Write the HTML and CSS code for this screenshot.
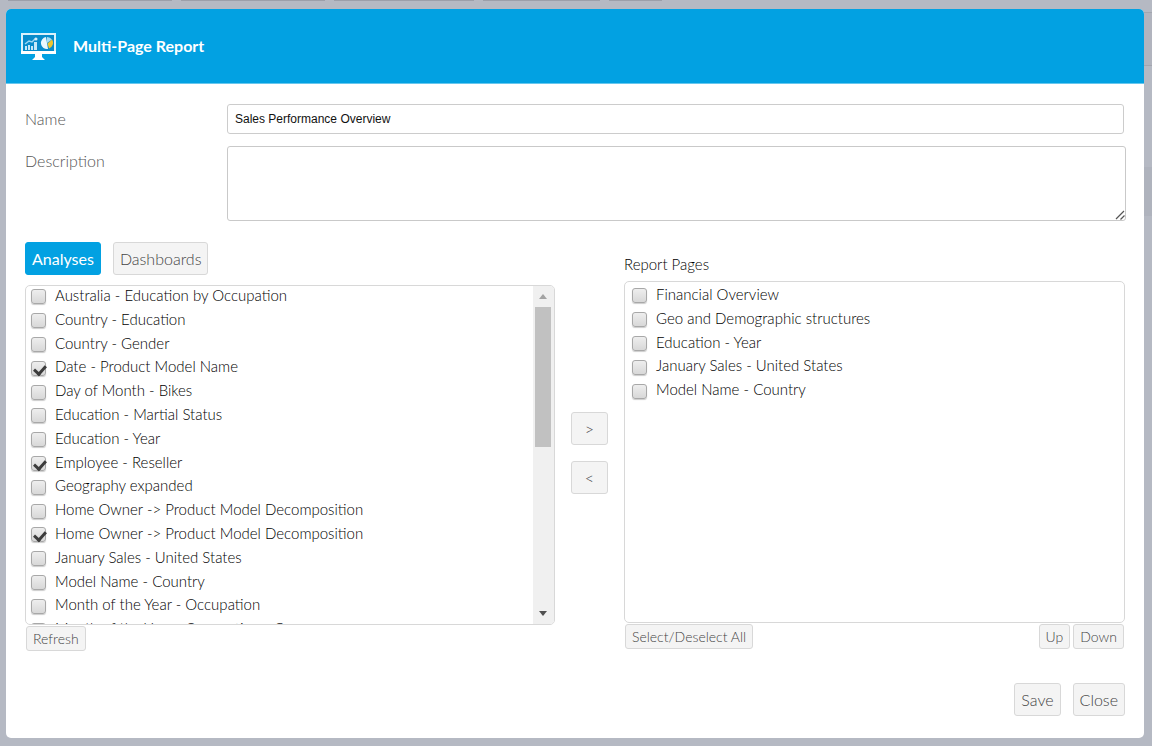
FILE: index.html
```html
<!DOCTYPE html>
<html lang="en">
<head>
<meta charset="utf-8">
<title>Multi-Page Report</title>
<link rel="stylesheet" href="styles.css">
</head>
<body>
<div class="backdrop" aria-hidden="true">
  <div class="tabs"><span class="tab tab-a"></span><span class="tab tab-b"></span><span class="tab tab-c"></span><span class="tab tab-d"></span><span class="tab tab-e"></span></div>
  <div class="band band-top"></div>
  <div class="band band-low"></div>
</div>
<main class="dialog">
  <header class="header">
    <svg class="logo" viewBox="0 0 35 29" width="35" height="29" aria-hidden="true">
      <rect x="1" y="3" width="33" height="19" fill="#078ccb" stroke="#d9f1fb" stroke-width="2"/>
      <path d="M0 20h35v3H0z" fill="#fff"/>
      <path d="M14 23h7v3l3 3H11l3-3z" fill="#fff"/>
      <path d="M4 15h2v4H4zM7 14h2v5H7zM10 15h2v4h-2zM13 11h3v8h-3z" fill="#c4e8f8"/>
      <path d="M4 13l4-3 3 1 4-4" fill="none" stroke="#9bd8f4" stroke-width="1.500"/>
      <circle cx="15" cy="8" r="1.500" fill="#d5effb"/>
      <path d="M25 6a6 6 0 1 0 2 12l-1-6z" fill="#e9f7fd"/>
      <path d="M26 6v6l5-3.500a6 6 0 0 0-5-2.500z" fill="#a5dcf4"/>
      <path d="M26.500 12.500l4.500-4a6 6 0 0 1-3 9z" fill="#f0c52f"/>
    </svg>
    <h1 class="title">Multi-Page Report</h1>
  </header>
  <form class="body">
    <div class="fields">
      <label class="field-label" for="name">Name</label>
      <input class="name" id="name" type="text" value="Sales Performance Overview">
      <label class="field-label" for="description">Description</label>
      <div class="area-wrap">
        <textarea class="description" id="description"></textarea>
        <svg class="grip" viewBox="0 0 10 10" width="10" height="10" aria-hidden="true"><path d="M1 9l8-8M5.500 9.500l4-4" stroke="#555" stroke-width="1.200" fill="none"/></svg>
      </div>
    </div>
    <div class="columns">
      <section class="source">
        <div class="switch">
          <button class="btn active" type="button">Analyses</button>
          <button class="btn" type="button">Dashboards</button>
        </div>
        <div class="list-box source-box">
          <ul class="list scrolled">
            <li><label class="row"><input type="checkbox">Australia - Education by Occupation</label></li>
            <li><label class="row"><input type="checkbox">Country - Education</label></li>
            <li><label class="row"><input type="checkbox">Country - Gender</label></li>
            <li><label class="row"><input type="checkbox" checked>Date - Product Model Name</label></li>
            <li><label class="row"><input type="checkbox">Day of Month - Bikes</label></li>
            <li><label class="row"><input type="checkbox">Education - Martial Status</label></li>
            <li><label class="row"><input type="checkbox">Education - Year</label></li>
            <li><label class="row"><input type="checkbox" checked>Employee - Reseller</label></li>
            <li><label class="row"><input type="checkbox">Geography expanded</label></li>
            <li><label class="row"><input type="checkbox">Home Owner -&gt; Product Model Decomposition</label></li>
            <li><label class="row"><input type="checkbox" checked>Home Owner -&gt; Product Model Decomposition</label></li>
            <li><label class="row"><input type="checkbox">January Sales - United States</label></li>
            <li><label class="row"><input type="checkbox">Model Name - Country</label></li>
            <li><label class="row"><input type="checkbox">Month of the Year - Occupation</label></li>
            <li><label class="row"><input type="checkbox">Month of the Year - Occupation - C</label></li>
          </ul>
          <div class="scrollbar" aria-hidden="true">
            <span class="arrow up"></span>
            <span class="thumb"></span>
            <span class="arrow down"></span>
          </div>
        </div>
        <div class="tools"><button class="btn small" type="button">Refresh</button></div>
      </section>
      <div class="movers">
        <button class="btn mover" type="button">&gt;</button>
        <button class="btn mover" type="button">&lt;</button>
      </div>
      <section class="target">
        <h2 class="caption">Report Pages</h2>
        <div class="list-box target-box">
          <ul class="list inset">
            <li><label class="row"><input type="checkbox">Financial Overview</label></li>
            <li><label class="row"><input type="checkbox">Geo and Demographic structures</label></li>
            <li><label class="row"><input type="checkbox">Education - Year</label></li>
            <li><label class="row"><input type="checkbox">January Sales - United States</label></li>
            <li><label class="row"><input type="checkbox">Model Name - Country</label></li>
          </ul>
        </div>
        <div class="tools">
          <button class="btn small" type="button">Select/Deselect All</button>
          <span class="order"><button class="btn small" type="button">Up</button><button class="btn small" type="button">Down</button></span>
        </div>
      </section>
    </div>
    <footer class="footer">
      <button class="btn" type="button">Save</button>
      <button class="btn" type="button">Close</button>
    </footer>
  </form>
</main>
</body>
</html>
```
FILE: styles.css
```css
* { box-sizing: border-box; }
body {
  margin: 0;
  min-height: 100vh;
  display: flex;
  padding: 9px 8px 8px 6px;
  background: #b5b9c3;
  color: #222;
  font-family: Lato, "Open Sans", sans-serif;
  font-weight: 300;
  font-size: 15px;
}
.backdrop { position: absolute; inset: 0; overflow: hidden; }
.tabs { display: flex; gap: 9px; padding-left: 8px; }
.tab { height: 1px; background: #9c9fa9; }
.tab-a { width: 164px; }
.tab-b { width: 144px; }
.tab-c { width: 140px; }
.tab-d { width: 117px; }
.tab-e { width: 53px; }
.band { margin-left: 50%; background: #b1b4be; }
.band-top { height: 54px; margin-top: 11px; border: solid #a3a6af; border-width: 1px 0; }
.band-low { height: 49px; margin-top: 101px; background: #afb3bd; }
.dialog {
  position: relative;
  flex: 1;
  min-width: 0;
  display: flex;
  flex-direction: column;
  background: #fff;
  border-radius: 5px;
  overflow: hidden;
}
.header {
  display: flex;
  align-items: center;
  gap: 17px;
  height: 75px;
  padding: 0 15px 1px;
  background: #02a1e2;
  border-bottom: 1px solid #67c7ee;
}
.title { margin: 0; color: #fff; font-size: 16px; line-height: 20px; font-weight: 700; }
.body { flex: 1; display: flex; flex-direction: column; padding: 20px 19px 22px 19px; }
.fields {
  display: grid;
  grid-template-columns: 202px 1fr;
  row-gap: 12px;
  margin-right: -1px;
}
.field-label { color: #555; font-size: 16px; line-height: 30px; }
.name {
  height: 30px;
  margin-right: 2px;
  padding: 0 7px;
  border: 1px solid #ccc;
  border-radius: 3px;
  font: 12px "Liberation Sans", sans-serif;
  color: #111;
}
.area-wrap { position: relative; display: flex; }
.description {
  flex: 1;
  height: 75px;
  border: 1px solid #c9c9c9;
  border-radius: 3px;
  resize: none;
}
.grip { position: absolute; right: 1px; bottom: 1px; }
.columns { display: flex; margin-top: 21px; }
.source { flex: 530; }
.target { flex: 501; margin-top: 12px; }
.switch { display: flex; gap: 12px; }
.btn {
  height: 33px;
  padding: 0 6px 1px;
  border: 1px solid #d8d8d8;
  border-radius: 3px;
  background: #f4f4f4;
  color: #444;
  font: inherit;
  font-size: 16px;
}
.btn.active { background: #02a1e2; border-color: #02a1e2; color: #fff; font-weight: 400; }
.btn.small { height: 25px; font-size: 14px; }
.list-box {
  display: flex;
  border: 1px solid #d8d8d8;
  border-radius: 5px;
  overflow: hidden;
  background: #fff;
}
.source-box { height: 340px; margin-top: 10px; }
.target-box { height: 342px; margin-top: 7px; }
.list { flex: 1; min-width: 0; margin: 0; padding: 0 0 0 5px; list-style: none; font-size: 14px; line-height: 1.7em; }
.list.scrolled { margin-top: -2px; }
.list.inset { padding: 1px 0 0 7px; }
.row { display: flex; align-items: center; gap: 9px; font-size: 15px; color: #000; }
.row input {
  appearance: none;
  flex: none;
  width: 15px;
  height: 15px;
  margin: 2px 0 0;
  border: 1px solid #a8a8a8;
  border-radius: 3px;
  background: linear-gradient(#eee, #d8d8d8);
  box-shadow: 0 1px 1px #ccc;
  position: relative;
}
.row input:checked::after {
  content: "";
  position: absolute;
  left: 4px;
  top: 1px;
  width: 5px;
  height: 9px;
  border: solid #3c3c3c;
  border-width: 0 3px 3px 0;
  transform: rotate(42deg);
}
.scrollbar {
  flex: none;
  width: 21px;
  display: flex;
  flex-direction: column;
  align-items: center;
  padding: 8px 1px 8px 0;
  background: #f0f0f0;
}
.arrow { border: 4px solid transparent; }
.arrow.up { border-top: 0; border-bottom: 5px solid #a3a3a3; }
.arrow.down { border-bottom: 0; border-top: 5px solid #505050; margin-top: auto; }
.thumb { width: 16px; height: 140px; margin-top: 8px; background: #c1c1c1; }
.tools { display: flex; justify-content: space-between; padding: 1px; }
.order { display: flex; gap: 3px; }
.movers {
  flex: none;
  width: 69px;
  display: flex;
  flex-direction: column;
  align-items: center;
  gap: 16px;
  padding-top: 170px;
}
.mover { width: 37px; }
.caption { margin: 0; font-size: 15px; line-height: 20px; font-weight: 300; color: #000; }
.footer { display: flex; justify-content: flex-end; gap: 12px; margin-top: auto; }
```
